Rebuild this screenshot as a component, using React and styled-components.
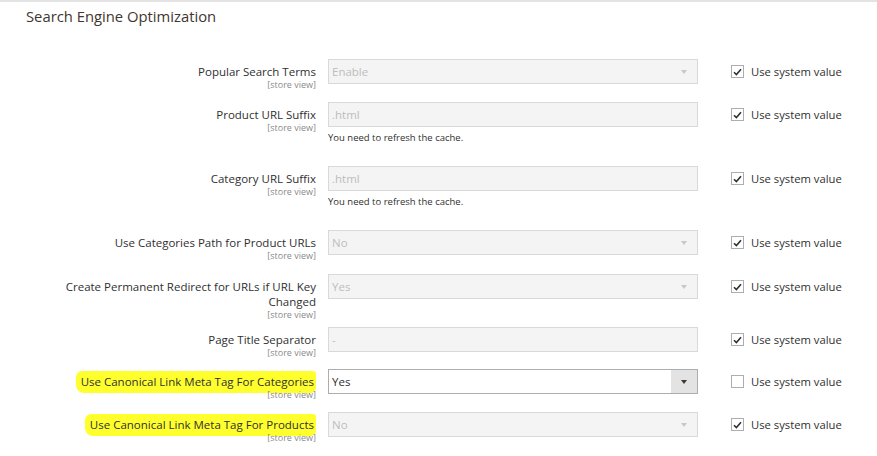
import React from "react";
import styled, { createGlobalStyle } from "styled-components";

const Global = createGlobalStyle`
  html, body { margin: 0; padding: 0; background: #fff; }
  body { font-family: "Open Sans", "DejaVu Sans", sans-serif; color: #303030; }
`;

const Page = styled.div`
  width: 877px;
  height: 456px;
  overflow: hidden;
  border-top: 2px solid #e3e3e3;
  box-sizing: border-box;
`;

const Title = styled.h2`
  margin: 0;
  padding: 4px 0 0 26px;
  font-size: 14.8px;
  line-height: 20px;
  font-weight: 400;
  color: #41362f;
`;

const Form = styled.div`
  padding-top: 33px;
  display: flex;
  flex-direction: column;
`;

const Row = styled.div`
  display: grid;
  grid-template-columns: 316px 370px auto;
  column-gap: 12px;
  align-items: start;
  padding-bottom: ${(p) => p.$gap ?? 18}px;
`;

const LabelCell = styled.div`
  text-align: right;
  padding-top: 5px;
  margin-bottom: -11px;
`;

const LabelText = styled.div`
  font-size: 11.5px;
  line-height: 15px;
  color: #303030;
`;

const Highlight = styled.span`
  background: #ffff2e;
  padding: 3px 2px 4px 5px;
  border-radius: 6px 3px 5px 8px;
  box-decoration-break: clone;
`;

const Scope = styled.div`
  font-size: 9px;
  line-height: 10px;
  margin-top: 1px;
  color: #8a8a8a;
`;

const Control = styled.div`
  display: flex;
  flex-direction: column;
`;

const Field = styled.div`
  height: 25px;
  box-sizing: border-box;
  border: 1px solid ${(p) => (p.$disabled ? "#d9d9d9" : "#adadad")};
  background: ${(p) => (p.$disabled ? "#f4f4f4" : "#fff")};
  display: flex;
  align-items: stretch;
`;

const Value = styled.div`
  flex: 1;
  padding-left: 3px;
  font-size: 11.5px;
  line-height: 23px;
  color: ${(p) => (p.$disabled ? "#bdbdbd" : "#303030")};
`;

const Arrow = styled.div`
  width: 26px;
  display: flex;
  align-items: center;
  justify-content: center;
  background: ${(p) => (p.$disabled ? "transparent" : "#e3e3e3")};
  &::after {
    content: "";
    border-left: 3.5px solid transparent;
    border-right: 3.5px solid transparent;
    border-top: 4px solid ${(p) => (p.$disabled ? "#c8c8c8" : "#41362f")};
  }
`;

const Note = styled.div`
  font-size: 9.5px;
  line-height: 14px;
  padding-top: 4px;
  color: #303030;
`;

const SysCell = styled.label`
  display: flex;
  align-items: center;
  gap: 7px;
  height: 25px;
  margin-left: 21px;
  font-size: 11.25px;
  color: #303030;
`;

const Box = styled.span`
  width: 13px;
  height: 13px;
  box-sizing: border-box;
  border: 1px solid #adadad;
  background: #fff;
  display: flex;
  align-items: center;
  justify-content: center;
`;

function Check({ checked }) {
  return (
    <Box>
      {checked && (
        <svg width="9" height="8" viewBox="0 0 9 8">
          <path d="M1 4.2 L3.4 6.6 L8 1.2" fill="none" stroke="#303030" strokeWidth="1.6" />
        </svg>
      )}
    </Box>
  );
}

const rows = [
  { label: "Popular Search Terms", value: "Enable", select: true, disabled: true, checked: true },
  { label: "Product URL Suffix", value: ".html", note: "You need to refresh the cache.", disabled: true, checked: true, gap: 21 },
  { label: "Category URL Suffix", value: ".html", note: "You need to refresh the cache.", disabled: true, checked: true, gap: 21 },
  { label: "Use Categories Path for Product URLs", value: "No", select: true, disabled: true, checked: true, gap: 19 },
  { label: ["Create Permanent Redirect for URLs if URL Key", "Changed"], value: "Yes", select: true, disabled: true, checked: true },
  { label: "Page Title Separator", value: "-", disabled: true, checked: true, gap: 17 },
  { label: "Use Canonical Link Meta Tag For Categories", value: "Yes", select: true, disabled: false, checked: false, hl: true },
  { label: "Use Canonical Link Meta Tag For Products", value: "No", select: true, disabled: true, checked: true, hl: true },
];

export default function App() {
  return (
    <>
      <Global />
      <Page>
        <Title>Search Engine Optimization</Title>
        <Form>
          {rows.map((r, i) => {
            const lines = Array.isArray(r.label) ? r.label : [r.label];
            return (
              <Row key={i} $gap={r.gap}>
                <LabelCell>
                  {lines.map((l, j) => (
                    <LabelText key={j}>{r.hl ? <Highlight>{l}</Highlight> : l}</LabelText>
                  ))}
                  <Scope>[store view]</Scope>
                </LabelCell>
                <Control>
                  <Field $disabled={r.disabled}>
                    <Value $disabled={r.disabled}>{r.value}</Value>
                    {r.select && <Arrow $disabled={r.disabled} />}
                  </Field>
                  {r.note && <Note>{r.note}</Note>}
                </Control>
                <SysCell>
                  <Check checked={r.checked} />
                  Use system value
                </SysCell>
              </Row>
            );
          })}
        </Form>
      </Page>
    </>
  );
}
